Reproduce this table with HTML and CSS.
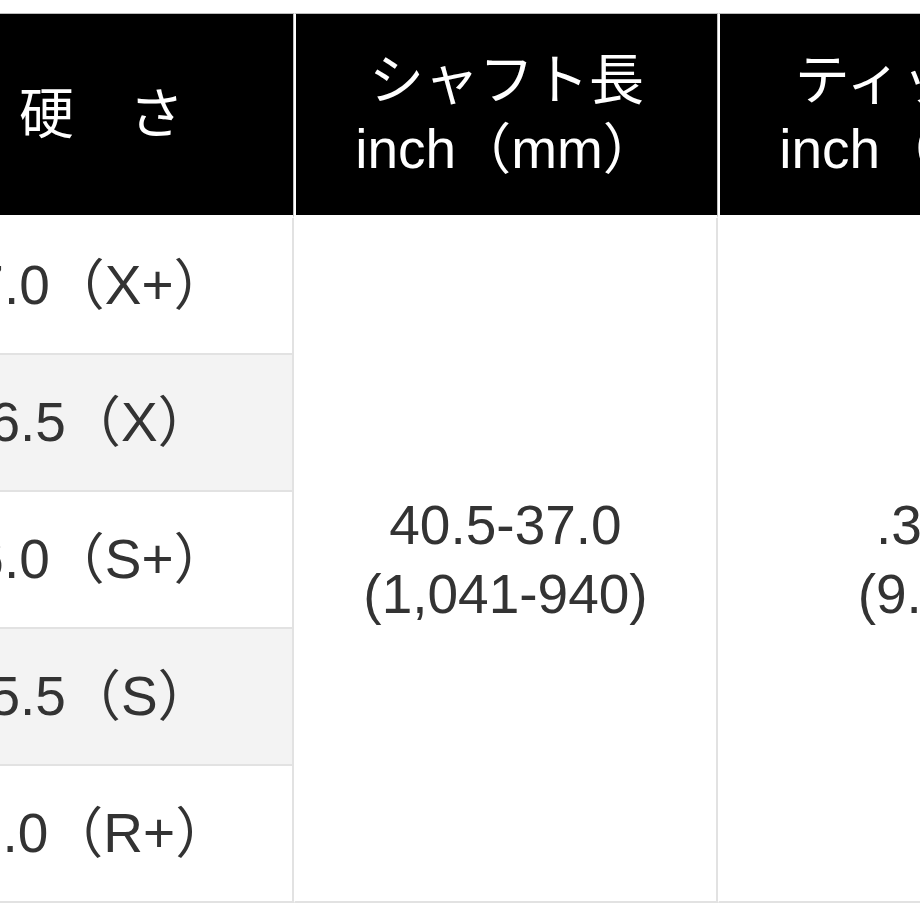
FILE: index.html
```html
<!DOCTYPE html>
<html lang="ja">
<head>
<meta charset="utf-8">
<title>スペック</title>
<link rel="stylesheet" href="styles.css">
</head>
<body>
<div class="wrap">
<table class="spec">
<colgroup><col class="c1"><col class="c2"><col class="c3"></colgroup>
<thead>
<tr><th class="h1">硬　さ</th><th>シャフト長<br>inch（mm）</th><th>ティップ径<br>inch（mm）</th></tr>
</thead>
<tbody>
<tr><td class="flex">7.0（X+）</td><td rowspan="5" class="big">40.5-37.0<br>(1,041-940)</td><td rowspan="5" class="big">.370<br>(9.40)</td></tr>
<tr class="alt"><td class="flex">6.5（X）</td></tr>
<tr><td class="flex">6.0（S+）</td></tr>
<tr class="alt"><td class="flex">5.5（S）</td></tr>
<tr><td class="flex">5.0（R+）</td></tr>
</tbody>
</table>
</div>
</body>
</html>
```
FILE: styles.css
```css
html, body {
  margin: 0;
  padding: 0;
  background: #fff;
  overflow: hidden;
}
.wrap {
  padding-top: 13px;
}
.spec {
  border-collapse: separate;
  border-spacing: 0;
  table-layout: fixed;
  width: 1232px;
  margin-left: -90px;
  font-family: "Liberation Sans", "Noto Sans CJK JP", sans-serif;
  font-size: 55px;
  color: #333;
}
.c1 { width: 384px; }
.c2 { width: 424px; }
.c3 { width: 424px; }
.spec th {
  background: #000;
  color: #fff;
  font-weight: normal;
  height: 201px;
  line-height: 69px;
  padding: 0;
  text-align: center;
  vertical-align: middle;
  border-top: 1px solid #bdbdbd;
  border-right: 1px solid #bdbdbd;
  border-bottom: 3px solid #fff;
}
.spec th + th {
  border-left: 2px solid #fff;
}
.spec td {
  height: 135px;
  padding: 0;
  text-align: center;
  vertical-align: middle;
  line-height: 69px;
  border-right: 2px solid #e2e2e2;
  border-bottom: 2px solid #e2e2e2;
  background: #fff;
}
.spec td.big {
  border-left: 1px solid #fff;
}
.spec tr.alt td {
  background: #f3f3f3;
}
```
